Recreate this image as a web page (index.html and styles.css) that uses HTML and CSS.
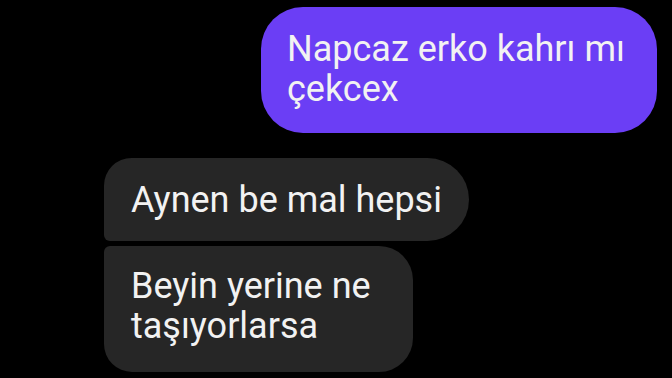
FILE: index.html
```html
<!DOCTYPE html>
<html lang="tr">
<head>
    <meta charset="UTF-8">
    <meta name="viewport" content="width=device-width, initial-scale=1.0">
    <title>Mesajlar</title>
    <link rel="stylesheet" href="styles.css">
</head>
<body>

    <div class="chat">
        <!-- Sent message -->
        <div class="row sent">
            <div class="bubble purple">Napcaz erko kahrı mı<br>çekcex</div>
        </div>

        <!-- Received messages -->
        <div class="group received">
            <div class="bubble gray first">Aynen be mal hepsi</div>
            <div class="bubble gray last">Beyin yerine ne<br>taşıyorlarsa</div>
        </div>
    </div>

</body>
</html>
```

FILE: styles.css
```css
* {
    box-sizing: border-box;
}

body {
    margin: 0;
    padding: 0;
    background: #000;
    font-family: 'Roboto', 'Noto Sans', sans-serif;
    color: #f2f2f2;
    width: 672px;
    height: 378px;
    overflow: hidden;
}

.chat {
    display: flex;
    flex-direction: column;
    padding-top: 7px;
}

.row {
    display: flex;
}

.sent {
    justify-content: flex-end;
    padding-right: 15px;
}

.bubble {
    font-size: 36px;
    line-height: 40px;
    width: fit-content;
}

.purple {
    background-color: #6b3ef5;
    width: 396px;
    height: 126px;
    padding: 22px 26px;
    border-radius: 42px;
}

.group {
    display: flex;
    flex-direction: column;
    gap: 5px;
    margin-top: 25px;
    padding-left: 104px;
}

.gray {
    background-color: #262626;
    padding: 22px 27px;
}

.gray.first {
    height: 83px;
    border-radius: 28px 42px 42px 6px;
}

.gray.last {
    height: 126px;
    padding-top: 20px;
    padding-right: 42px;
    border-radius: 6px 34px 34px 28px;
}
```
